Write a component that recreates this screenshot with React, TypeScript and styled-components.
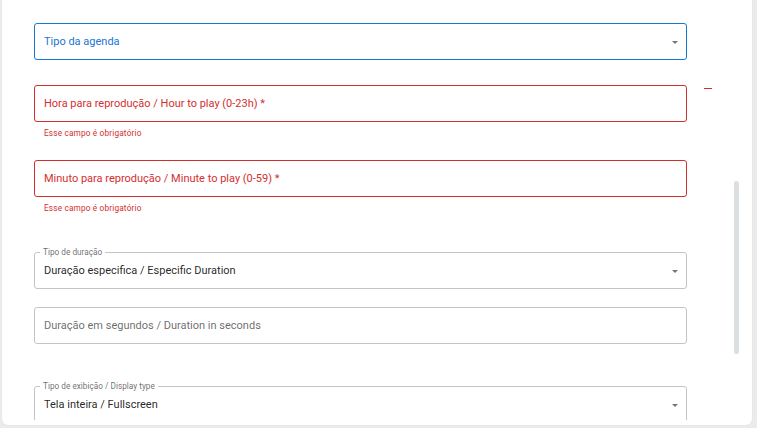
import React, { FC } from 'react';
import styled, { createGlobalStyle } from 'styled-components';

const colors = {
  blue: '#1976d2',
  red: '#d32f2f',
  border: '#c4c4c4',
  text: 'rgba(0, 0, 0, 0.87)',
  muted: 'rgba(0, 0, 0, 0.6)',
  arrow: '#757575',
};

type Tone = 'focus' | 'error' | 'idle';

const toneColor = (tone: Tone) =>
  tone === 'focus' ? colors.blue : tone === 'error' ? colors.red : colors.border;

const GlobalStyle = createGlobalStyle`
  html, body {
    margin: 0;
    padding: 0;
    background: #ebebeb;
    font-family: Roboto, "Liberation Sans", Arial, sans-serif;
  }
  * {
    box-sizing: border-box;
  }
`;

type FieldProps = {
  tone?: Tone;
  label?: string;
  value?: string;
  placeholder?: string;
  select?: boolean;
  helper?: string;
  side?: boolean;
  spacing: number;
};

const Field: FC<FieldProps> = ({
  tone = 'idle',
  label,
  value,
  placeholder,
  select,
  helper,
  side,
  spacing,
}) => {
  return (
    <Row $spacing={spacing}>
      <Group>
        <Box $tone={tone}>
          {label && <FloatLabel>{label}</FloatLabel>}
          {value ? (
            <Value>{value}</Value>
          ) : (
            <Placeholder $tone={tone}>{placeholder}</Placeholder>
          )}
          {select && <Arrow />}
        </Box>
        {helper && <Helper>{helper}</Helper>}
      </Group>
      {side && (
        <Aside>
          <Dash />
        </Aside>
      )}
    </Row>
  );
};

export default function App() {
  return (
    <>
      <GlobalStyle />
      <Page>
        <Card>
          <Scroll>
            <Form>
              <Field tone="focus" placeholder="Tipo da agenda" select spacing={25} />
              <Field
                tone="error"
                placeholder="Hora para reprodução / Hour to play (0-23h) *"
                helper="Esse campo é obrigatório"
                side
                spacing={22}
              />
              <Field
                tone="error"
                placeholder="Minuto para reprodução / Minute to play (0-59) *"
                helper="Esse campo é obrigatório"
                spacing={39}
              />
              <Field
                label="Tipo de duração"
                value="Duração especifica / Especific Duration"
                select
                spacing={18}
              />
              <Field placeholder="Duração em segundos / Duration in seconds" spacing={42} />
              <Field
                label="Tipo de exibição / Display type"
                value="Tela inteira / Fullscreen"
                select
                spacing={0}
              />
            </Form>
          </Scroll>
          <ScrollThumb />
        </Card>
      </Page>
    </>
  );
}

const Page = styled.div`
  height: 428px;
  display: flex;
  padding: 0 5px 3px 2px;
`;

const Card = styled.div`
  flex: 1;
  position: relative;
  background: #fff;
  border-radius: 0 0 6px 6px;
  padding-bottom: 5px;
  box-shadow: 0 0 1px rgba(0, 0, 0, 0.12);
`;

const Scroll = styled.div`
  height: 100%;
  overflow: hidden;
  padding: 23px 0 0 32px;
`;

const Form = styled.div`
  display: flex;
  flex-direction: column;
`;

const Row = styled.div<{ $spacing: number }>`
  display: flex;
  gap: 17px;
  margin-bottom: ${(p) => p.$spacing}px;
`;

const Group = styled.div`
  width: 653px;
  display: flex;
  flex-direction: column;
`;

const Box = styled.div<{ $tone: Tone }>`
  position: relative;
  height: 37px;
  display: flex;
  align-items: center;
  justify-content: space-between;
  padding: 0 8px 0 9px;
  border: 1px solid ${(p) => toneColor(p.$tone)};
  border-radius: 3px;
  font-size: 11px;
`;

const FloatLabel = styled.span`
  position: absolute;
  top: -6px;
  left: 5px;
  padding: 0 3px;
  background: #fff;
  font-size: 8.25px;
  line-height: 10px;
  color: ${colors.muted};
`;

const Value = styled.span`
  color: ${colors.text};
`;

const Placeholder = styled.span<{ $tone: Tone }>`
  color: ${(p) => (p.$tone === 'idle' ? colors.muted : toneColor(p.$tone))};
`;

const Arrow = styled.span`
  width: 0;
  height: 0;
  border-left: 3.5px solid transparent;
  border-right: 3.5px solid transparent;
  border-top: 3.5px solid ${colors.arrow};
  margin-top: 1px;
`;

const Helper = styled.div`
  margin-top: 6px;
  padding-left: 10px;
  font-size: 8.25px;
  line-height: 10px;
  letter-spacing: 0.02em;
  color: ${colors.red};
`;

const Aside = styled.div`
  padding-top: 3px;
`;

const Dash = styled.span`
  display: block;
  width: 8px;
  height: 1px;
  background: ${colors.red};
`;

const ScrollThumb = styled.div`
  position: absolute;
  top: 181px;
  left: 732px;
  width: 5px;
  height: 173px;
  border-radius: 3px;
  background: #dadfe1;
`;
